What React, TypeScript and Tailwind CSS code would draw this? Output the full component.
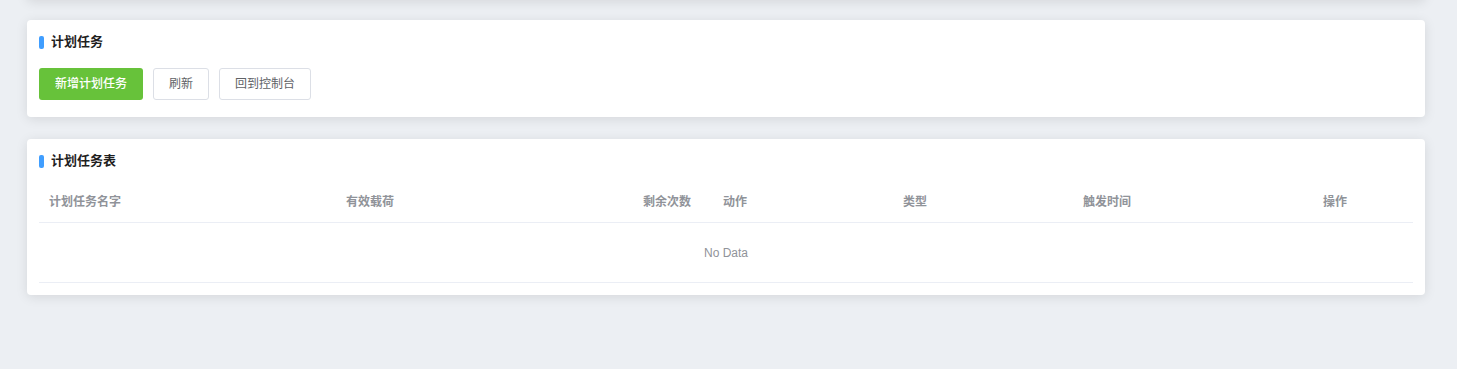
import React from "react";

const columns = [
  { label: "计划任务名字", width: "w-[297px]" },
  { label: "有效载荷", width: "w-[297px]" },
  { label: "剩余次数", width: "w-[80px]" },
  { label: "动作", width: "w-[180px]" },
  { label: "类型", width: "w-[180px]" },
  { label: "触发时间", width: "w-[240px]" },
  { label: "操作", width: "w-[100px]" },
];

function CardTitle({ children }: { children: React.ReactNode }) {
  return (
    <div className="flex items-center h-[20px] gap-[7px]">
      <span className="w-[5px] h-[13px] rounded-[2px] bg-[#409eff]" />
      <h3 className="text-[13px] font-bold text-[#1f1f1f] leading-[20px]">{children}</h3>
    </div>
  );
}

export default function App() {
  return (
    <div
      className="min-h-[369px] bg-[#eceff3] pl-[27px] pr-[32px] pb-[40px] overflow-hidden"
      style={{ fontFamily: '"Liberation Sans", "Noto Sans CJK SC", sans-serif' }}
    >
      {/* card above, only its shadow shows */}
      <div className="h-[40px] -mt-[40px] bg-white rounded-[4px] shadow-[0_2px_12px_0_rgba(0,0,0,0.1)] mb-[20px]" />

      {/* Toolbar card */}
      <div className="bg-white rounded-[4px] shadow-[0_2px_12px_0_rgba(0,0,0,0.1)] px-[12px] pt-[12px] pb-[17px]">
        <CardTitle>计划任务</CardTitle>
        <div className="flex gap-[10px] mt-[16px]">
          <button className="h-[32px] w-[104px] rounded-[3px] bg-[#67c23a] text-white text-[12px] font-medium">
            新增计划任务
          </button>
          <button className="h-[32px] w-[56px] rounded-[3px] border border-[#dcdfe6] bg-white text-[#606266] text-[12px]">
            刷新
          </button>
          <button className="h-[32px] w-[92px] rounded-[3px] border border-[#dcdfe6] bg-white text-[#606266] text-[12px]">
            回到控制台
          </button>
        </div>
      </div>

      {/* Table card */}
      <div className="mt-[22px] bg-white rounded-[4px] shadow-[0_2px_12px_0_rgba(0,0,0,0.1)] px-[12px] pt-[12px] pb-[12px]">
        <CardTitle>计划任务表</CardTitle>
        <div className="mt-[11px]">
          <div className="flex h-[41px] items-center border-b border-[#ebeef5]">
            {columns.map((c) => (
              <div key={c.label} className={`${c.width} px-[10px] text-[12px] font-bold text-[#909399]`}>
                {c.label}
              </div>
            ))}
          </div>
          <div className="h-[60px] flex items-center justify-center border-b border-[#ebeef5] text-[12px] text-[#909399]">
            No Data
          </div>
        </div>
      </div>
    </div>
  );
}
